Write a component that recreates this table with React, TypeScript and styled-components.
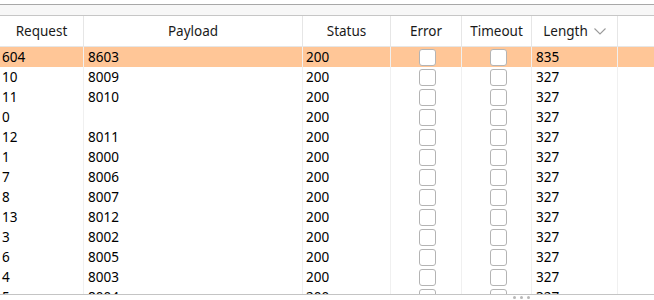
import React from "react";
import styled, { createGlobalStyle } from "styled-components";

const GlobalStyle = createGlobalStyle`
  html, body {
    margin: 0;
    padding: 0;
    background: #ffffff;
  }
  body {
    font-family: "Noto Sans", "Segoe UI", sans-serif;
    color: #000;
  }
`;

const COLS = "84px 219px 88px 71px 70px 86px 1fr";

const Frame = styled.div`
  width: 654px;
  height: 300px;
  display: flex;
  flex-direction: column;
  overflow: hidden;
`;

const Toolbar = styled.div`
  height: 10px;
  margin-top: 4px;
  border-top: 1px solid #a8a8a8;
  border-bottom: 1px solid #c6c6c6;
  background: #f7f7f7;
`;

const HeaderRow = styled.div`
  display: grid;
  grid-template-columns: ${COLS};
  height: 30px;
  border-bottom: 1px solid #e6e6e6;
  flex-shrink: 0;
`;

const HeadCell = styled.div`
  display: flex;
  align-items: center;
  justify-content: center;
  gap: 6px;
  font-size: 13.5px;
  color: #1a1a1a;
  border-right: 1px solid #e6e6e6;
  &:last-child {
    border-right: none;
  }
`;

const Body = styled.div`
  height: 247px;
  overflow: hidden;
  flex-shrink: 0;
`;

const Row = styled.div<{ $selected?: boolean }>`
  display: grid;
  grid-template-columns: ${COLS};
  height: 20px;
  background: ${(p) => (p.$selected ? "#ffc697" : "#ffffff")};
`;

const Cell = styled.div<{ $pad?: number; $center?: boolean }>`
  display: flex;
  align-items: center;
  justify-content: ${(p) => (p.$center ? "center" : "flex-start")};
  padding-left: ${(p) => p.$pad ?? 0}px;
  font-size: 13.5px;
  white-space: nowrap;
  border-right: 1px solid #f0f0f0;
  &:last-child {
    border-right: none;
  }
`;

const Check = styled.span<{ $shift?: number }>`
  box-sizing: border-box;
  width: 17px;
  height: 17px;
  margin-left: ${(p) => p.$shift ?? 0}px;
  border: 1px solid #b4b4b4;
  border-radius: 3px;
  background: #fff;
`;

const Footer = styled.div`
  flex: 1;
  border-top: 1px solid #c4c4c4;
  display: flex;
  justify-content: center;
  padding-left: 388px;
  padding-top: 1px;
`;

const Grip = styled.div`
  display: flex;
  gap: 4px;
  span {
    width: 3px;
    height: 3px;
    border-radius: 50%;
    background: #b8b8b8;
  }
`;

const Chevron = () => (
  <svg width="12" height="7" viewBox="0 0 12 7" fill="none">
    <path d="M0.5 0.5 L6 6 L11.5 0.5" stroke="#9a9a9a" strokeWidth="1.1" />
  </svg>
);

const results: [string, string][] = [
  ["604", "8603"],
  ["10", "8009"],
  ["11", "8010"],
  ["0", ""],
  ["12", "8011"],
  ["1", "8000"],
  ["7", "8006"],
  ["8", "8007"],
  ["13", "8012"],
  ["3", "8002"],
  ["6", "8005"],
  ["4", "8003"],
  ["5", "8004"],
];

const App = () => {
  return (
    <>
      <GlobalStyle />
      <Frame>
        <Toolbar />
        <HeaderRow>
          <HeadCell>Request</HeadCell>
          <HeadCell>Payload</HeadCell>
          <HeadCell>Status</HeadCell>
          <HeadCell>Error</HeadCell>
          <HeadCell>Timeout</HeadCell>
          <HeadCell>
            Length <Chevron />
          </HeadCell>
          <HeadCell />
        </HeaderRow>
        <Body>
          {results.map(([req, payload], i) => (
            <Row key={req} $selected={i === 0}>
              <Cell $pad={2}>{req}</Cell>
              <Cell $pad={4}>{payload}</Cell>
              <Cell $pad={3}>200</Cell>
              <Cell $center>
                <Check $shift={3} />
              </Cell>
              <Cell $center>
                <Check $shift={3} />
              </Cell>
              <Cell $pad={4}>{i === 0 ? "835" : "327"}</Cell>
              <Cell />
            </Row>
          ))}
        </Body>
        <Footer>
          <Grip>
            <span />
            <span />
            <span />
          </Grip>
        </Footer>
      </Frame>
    </>
  );
};

export default App;
